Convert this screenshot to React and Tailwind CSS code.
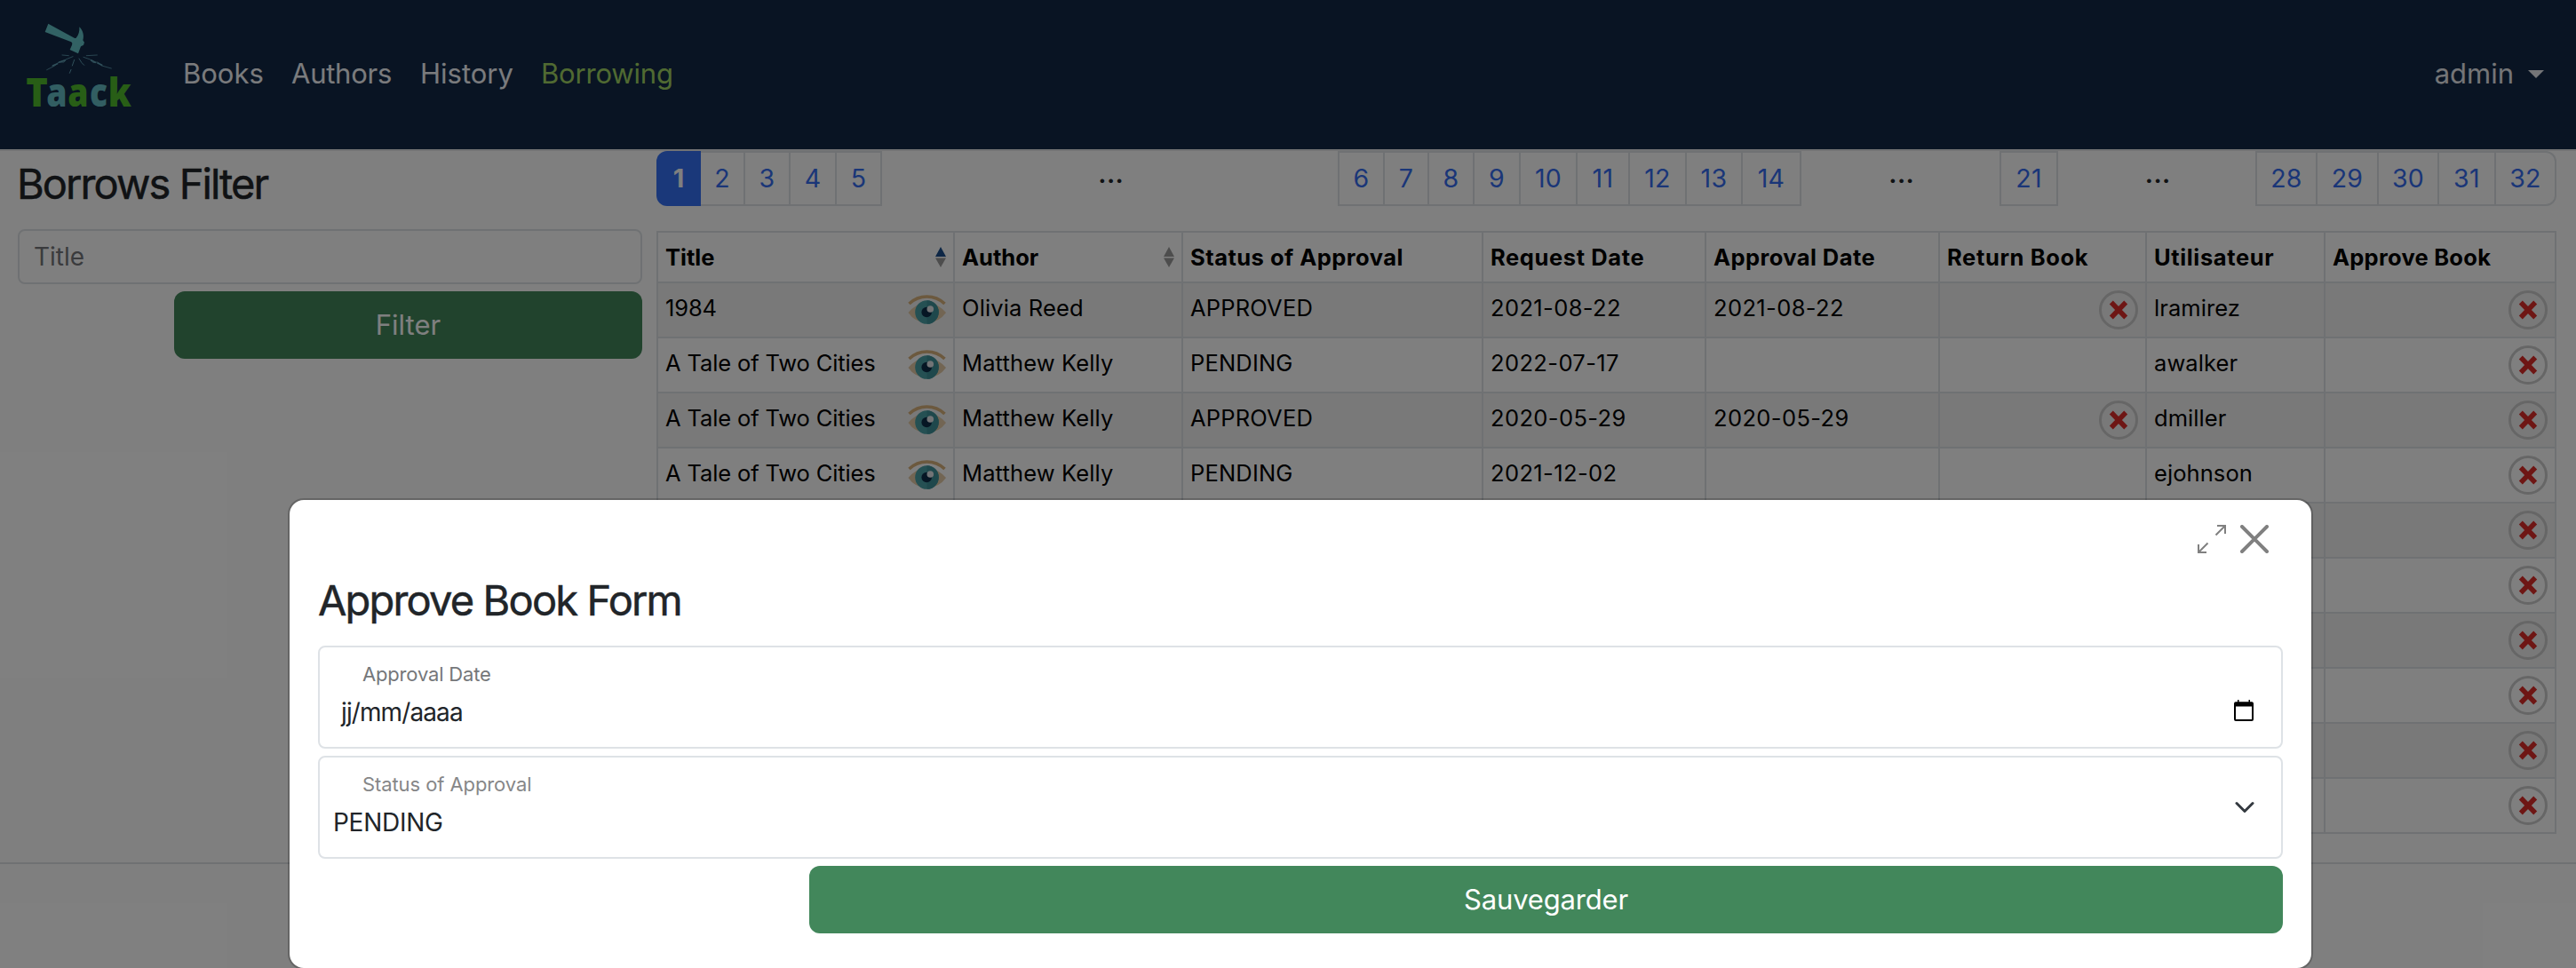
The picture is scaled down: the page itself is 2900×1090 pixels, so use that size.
const NAV = [
  { label: "Books", cls: "w-[122px] text-[#f4f6fa]" },
  { label: "Authors", cls: "w-[145px] text-[#f4f6fa] -tracking-[0.008em]" },
  { label: "History", cls: "w-[136px] text-[#f4f6fa]" },
  { label: "Borrowing", cls: "text-[#a0d464] -tracking-[0.006em]" },
];

const PAGES = [
  ["1", "w-[50px]"],
  ["2", "w-[50px]"],
  ["3", "w-[51px]"],
  ["4", "w-[52px]"],
  ["5", "w-[51px]"],
  ["...", "w-[513px]"],
  ["6", "w-[53px] border-l-2"],
  ["7", "w-[50px]"],
  ["8", "w-[51px]"],
  ["9", "w-[52px]"],
  ["10", "w-[64px]"],
  ["11", "w-[59px]"],
  ["12", "w-[64px]"],
  ["13", "w-[63px]"],
  ["14", "w-[66px]"],
  ["...", "w-[223px]"],
  ["21", "w-[66px] border-l-2"],
  ["...", "w-[222px]"],
  ["28", "w-[70px] border-l-2"],
  ["29", "w-[69px]"],
  ["30", "w-[68px]"],
  ["31", "w-[64px]"],
  ["32", "w-[68px] rounded-r-xl"],
];

const COLUMNS = [
  { label: "Title", width: "w-[334px]", sort: "asc" },
  { label: "Author", width: "w-[257px]", sort: "none" },
  { label: "Status of Approval", width: "w-[338px]", track: "tracking-[0.019em]" },
  { label: "Request Date", width: "w-[251px]", track: "tracking-[0.024em]" },
  { label: "Approval Date", width: "w-[263px]", track: "tracking-[0.017em]" },
  { label: "Return Book", width: "w-[233px]", track: "tracking-[0.025em]" },
  { label: "Utilisateur", width: "w-[201px]", track: "tracking-[0.025em]" },
  { label: "Approve Book", width: "w-[260px]", track: "tracking-[0.010em]" },
];

const ROWS = [
  ["1984", "Olivia Reed", "APPROVED", "2021-08-22", "2021-08-22", true, "lramirez"],
  ["A Tale of Two Cities", "Matthew Kelly", "PENDING", "2022-07-17", "", false, "awalker"],
  ["A Tale of Two Cities", "Matthew Kelly", "APPROVED", "2020-05-29", "2020-05-29", true, "dmiller"],
  ["A Tale of Two Cities", "Matthew Kelly", "PENDING", "2021-12-02", "", false, "ejohnson"],
  null,
  null,
  null,
  null,
  null,
  null,
];

function Logo() {
  return (
    <svg className="h-[130px] w-[140px]" viewBox="0 0 420 390">
      <path
        fill="#64c4c8"
        d="M103 50 L92 78 L181 112 Q186 116 183 122 L176 138 L204 151 L213 127 L222 122 L225 113 L220 106 C225 90 220 72 208 61 C209 76 206 88 197 98 Q193 101 188 97 Z"
      />
      <g stroke="#5f9fb4" fill="none" strokeLinecap="round">
        <path strokeWidth="2.5" d="M186 161 L162 171 L156 180 L138 180 L125 192 L98 206" />
        <path strokeWidth="5" d="M160 173 L140 180 M134 185 L118 192" />
        <path strokeWidth="2.5" d="M222 163 L245 171 L254 181 L270 180 L284 192 L316 201" />
        <path strokeWidth="5" d="M248 173 L262 181 M270 183 L284 190" />
        <path strokeWidth="2.5" d="M150 156 L172 158 M232 158 L268 156" />
        <path strokeWidth="3" d="M191 172 L184 192 M180 205 L175 217 M207 168 L216 182 L224 190" />
      </g>
      <g fontFamily="Open Sans" fontWeight="800" fontSize="133">
        <text x="28" y="329" fill="#50bc2c" textLength="74" lengthAdjust="spacingAndGlyphs">T</text>
        <text x="97" y="329" fill="#64bcc4" textLength="70" lengthAdjust="spacingAndGlyphs">a</text>
        <text x="169" y="329" fill="#50bc2c" textLength="70" lengthAdjust="spacingAndGlyphs">a</text>
        <text x="243" y="329" fill="#64bcc4" textLength="60" lengthAdjust="spacingAndGlyphs">c</text>
        <text x="305" y="329" fill="#50bc2c" textLength="78" lengthAdjust="spacingAndGlyphs">k</text>
      </g>
    </svg>
  );
}

function Eye() {
  return (
    <svg className="h-[36px] w-[44px] shrink-0" viewBox="0 0 44 36">
      <path d="M0.500 21 Q9 11 21.500 9 Q34 11 43 21 Q36 31 21.500 33 Q7 31 0.500 21 Z" fill="#e4cba6" />
      <path d="M1.500 11 Q10 3 21.500 3 Q33 3 41.500 11" fill="none" stroke="#d8b27c" strokeWidth="3.600" />
      <circle cx="21.500" cy="20.500" r="13.300" fill="#4aa0a6" />
      <path d="M21.500 7.200 a13.300 13.300 0 0 1 0 26.600 Z" fill="#3f9098" />
      <circle cx="21.200" cy="20.500" r="5.800" fill="#0c2c48" />
      <circle cx="25.300" cy="17" r="3.800" fill="#e4e8ec" />
    </svg>
  );
}

function CrossButton() {
  return (
    <svg className="h-[44px] w-[44px] shrink-0" viewBox="0 0 44 44">
      <circle cx="22" cy="22" r="20.500" fill="none" stroke="#cccccc" strokeWidth="3" />
      <path d="M13.800 13.500 L30.200 30.500 M30.200 13.500 L13.800 30.500" stroke="#dc2c28" strokeWidth="5.500" />
    </svg>
  );
}

function SortIcon({ active }) {
  return (
    <svg className="h-[23px] w-[12px]" viewBox="0 0 12 23">
      <path d="M6 0 L12 11 H0 Z" fill={active ? "#1c4f8c" : "#9a9a9a"} />
      <path d="M0 12.500 H12 L6 23 Z" fill="#9a9a9a" />
    </svg>
  );
}

function PageLink({ label, cls, active }) {
  if (label === "...") {
    return (
      <li className={`flex h-[62px] shrink-0 items-center justify-center pb-[13px] pl-[2px] text-[32px] font-medium text-[#212529] ${cls}`}>...</li>
    );
  }
  if (active) {
    return (
      <li className={`flex h-[62px] shrink-0 items-center justify-center rounded-l-xl bg-[#3571f5] text-[29px] font-bold text-white ${cls}`}>
        {label}
      </li>
    );
  }
  return (
    <li className={`flex h-[62px] shrink-0 items-center justify-center border-y-2 border-r-2 border-[#dee2e6] text-[28.5px] tracking-[0.01em] text-[#356cf0] ${cls}`}>
      {label}
    </li>
  );
}

function HeaderCell({ column }) {
  return (
    <th className="h-[57px] border-t-2 border-l-2 border-[#dee2e6] p-0 text-left">
      <div className={`flex items-center justify-between pr-[8px] pl-[8px] text-[25.5px] leading-[36px] font-bold whitespace-nowrap text-black ${column.track || ""}`}>
        <span>{column.label}</span>
        {column.sort && <SortIcon active={column.sort === "asc"} />}
      </div>
    </th>
  );
}

function Cell({ children, icon, iconPad, track }) {
  return (
    <td className="h-[62px] border-t-2 border-l-2 border-[#dee2e6] p-0">
      <div className={`flex h-[60px] items-center justify-between pl-[8px] whitespace-nowrap ${iconPad || ""}`}>
        <span className={`pb-[4px] text-[25.5px] text-black ${track || ""}`}>{children}</span>
        {icon}
      </div>
    </td>
  );
}

function BorrowRow({ row, striped }) {
  const r = row || ["", "", "", "", "", false, ""];
  return (
    <tr className={striped ? "bg-[#f2f2f2]" : "bg-white"}>
      <Cell icon={row ? <Eye /> : null} iconPad="pr-[7px]" track="-tracking-[0.005em]">{r[0]}</Cell>
      <Cell track="tracking-[0.005em]">{r[1]}</Cell>
      <Cell track="tracking-[0.007em]">{r[2]}</Cell>
      <Cell track="tracking-[0.015em]">{r[3]}</Cell>
      <Cell track="tracking-[0.015em]">{r[4]}</Cell>
      <Cell icon={r[5] ? <CrossButton /> : null} iconPad="pr-[8px]" />
      <Cell track="tracking-[0.003em]">{r[6]}</Cell>
      <Cell icon={<CrossButton />} iconPad="pr-[8px]" />
    </tr>
  );
}

function ApproveDialog() {
  return (
    <div className="mt-[561px] ml-[324px] h-[531px] w-[2280px] rounded-[18px] border-2 border-black/20 bg-white bg-clip-padding pr-[32px] pl-[32px]">
      <div className="flex items-center justify-end gap-[16px] pt-[28px] pr-[16px]">
        <svg className="h-[32px] w-[32px]" viewBox="0 0 32 32" fill="none" stroke="#808080" strokeWidth="2">
          <path d="M20.500 11.500 L31 1 M22 1 H31 V10" />
          <path d="M11.500 20.500 L1 31 M1 22 V31 H10" />
        </svg>
        <svg className="h-[32px] w-[32px]" viewBox="0 0 32 32" fill="none" stroke="#808080" strokeWidth="4" strokeLinecap="round">
          <path d="M2 2 L30 30 M30 2 L2 30" />
        </svg>
      </div>
      <h2 className="mt-[25px] text-[47px] leading-[56px] font-normal -tracking-[0.039em] text-[#212529] [-webkit-text-stroke:0.5px_#212529]">Approve Book Form</h2>
      <div className="mt-[23px] flex h-[116px] items-end justify-between rounded-lg border-2 border-[#dee2e6] pr-[31px] pb-[20px]">
        <div className="flex flex-col">
          <label className="pl-[48px] text-[22px] leading-[32px] -tracking-[0.008em] text-[#75777a]">Approval Date</label>
          <span className="mt-[8px] pl-[24px] text-[28px] leading-[38px] -tracking-[0.032em] text-[#212529]">jj/mm/aaaa</span>
        </div>
        <svg className="mb-[9px] h-[24px] w-[22px]" viewBox="0 0 22 24">
          <path
            fill="#000"
            fillRule="evenodd"
            d="M4 0 H5.500 V2.200 H16.500 V0 H18 V2.200 H20 A2 2 0 0 1 22 4.200 V22 A2 2 0 0 1 20 24 H2 A2 2 0 0 1 0 22 V4.200 A2 2 0 0 1 2 2.200 H4 Z M2 7.500 V22 H20 V7.500 Z"
          />
        </svg>
      </div>
      <div className="mt-[8px] flex h-[116px] items-end justify-between rounded-lg border-2 border-[#dee2e6] pr-[30px] pb-[20px]">
        <div className="flex flex-col">
          <label className="pl-[48px] text-[22px] leading-[32px] -tracking-[0.004em] text-[#868788]">Status of Approval</label>
          <span className="mt-[8px] pl-[15px] text-[28px] leading-[38px] -tracking-[0.010em] text-[#212529]">PENDING</span>
        </div>
        <svg className="mb-[29px] h-[14px] w-[22px]" viewBox="0 0 22 14" fill="none" stroke="#343a40" strokeWidth="3" strokeLinecap="round" strokeLinejoin="round">
          <path d="M2 2.500 L11 11.500 L20 2.500" />
        </svg>
      </div>
      <div className="mt-[8px] flex justify-end">
        <button className="h-[76px] w-[1659px] rounded-xl bg-[#42875b] text-[31px] -tracking-[0.006em] text-white">Sauvegarder</button>
      </div>
    </div>
  );
}

export default function App() {
  return (
    <div className="relative h-[1090px] w-[2900px] overflow-hidden bg-white font-[Inter,sans-serif]">
      <header className="flex h-[168px] items-start bg-[#122846] pl-[20px]">
        <div className="mt-[10px]">
          <Logo />
        </div>
        <nav className="ml-[46px] flex pt-[62px] text-[31px] leading-[42px]">
          {NAV.map((item) => (
            <a key={item.label} className={item.cls}>{item.label}</a>
          ))}
        </nav>
        <div className="mr-[36px] ml-auto flex items-center gap-[16px] pt-[62px] text-[31px] leading-[42px] text-[#e8eaee]">
          <span>admin</span>
          <svg className="h-[9px] w-[18px]" viewBox="0 0 18 9">
            <path d="M0 0 H18 L9 9 Z" fill="#e8eaee" />
          </svg>
        </div>
      </header>
      <div className="h-[2px] bg-[#e4e6e8]" />

      <main className="flex h-[801px]">
        <aside className="ml-[20px] w-[703px]">
          <h1 className="-ml-[1px] pt-[9px] text-[47px] leading-[56px] font-normal -tracking-[0.041em] text-[#212529] [-webkit-text-stroke:0.5px_#212529]">Borrows Filter</h1>
          <div className="mt-[23px] flex h-[62px] items-center rounded-lg border-2 border-[#dee2e6] pl-[16px] text-[28px] text-[#75777a]">Title</div>
          <div className="mt-[8px] flex justify-end">
            <button className="h-[76px] w-[527px] rounded-xl bg-[#42875b] text-[31px] text-white">Filter</button>
          </div>
        </aside>

        <section className="ml-[16px] w-[2139px]">
          <ul className="flex">
            {PAGES.map(([label, cls], i) => (
              <PageLink key={i} label={label} cls={cls} active={i === 0} />
            ))}
          </ul>
          <table className="mt-[28px] w-[2139px] table-fixed border-separate border-spacing-0 border-r-2 border-b-2 border-[#dee2e6]">
            <colgroup>
              {COLUMNS.map((c) => (
                <col key={c.label} className={c.width} />
              ))}
            </colgroup>
            <thead>
              <tr>
                {COLUMNS.map((c) => (
                  <HeaderCell key={c.label} column={c} />
                ))}
              </tr>
            </thead>
            <tbody>
              {ROWS.map((row, i) => (
                <BorrowRow key={i} row={row} striped={i % 2 === 0} />
              ))}
            </tbody>
          </table>
        </section>
      </main>
      <footer className="h-[119px] border-t-2 border-[#dee2e6]" />

      <div className="absolute inset-0 overflow-hidden bg-black/50">
        <ApproveDialog />
      </div>
    </div>
  );
}
